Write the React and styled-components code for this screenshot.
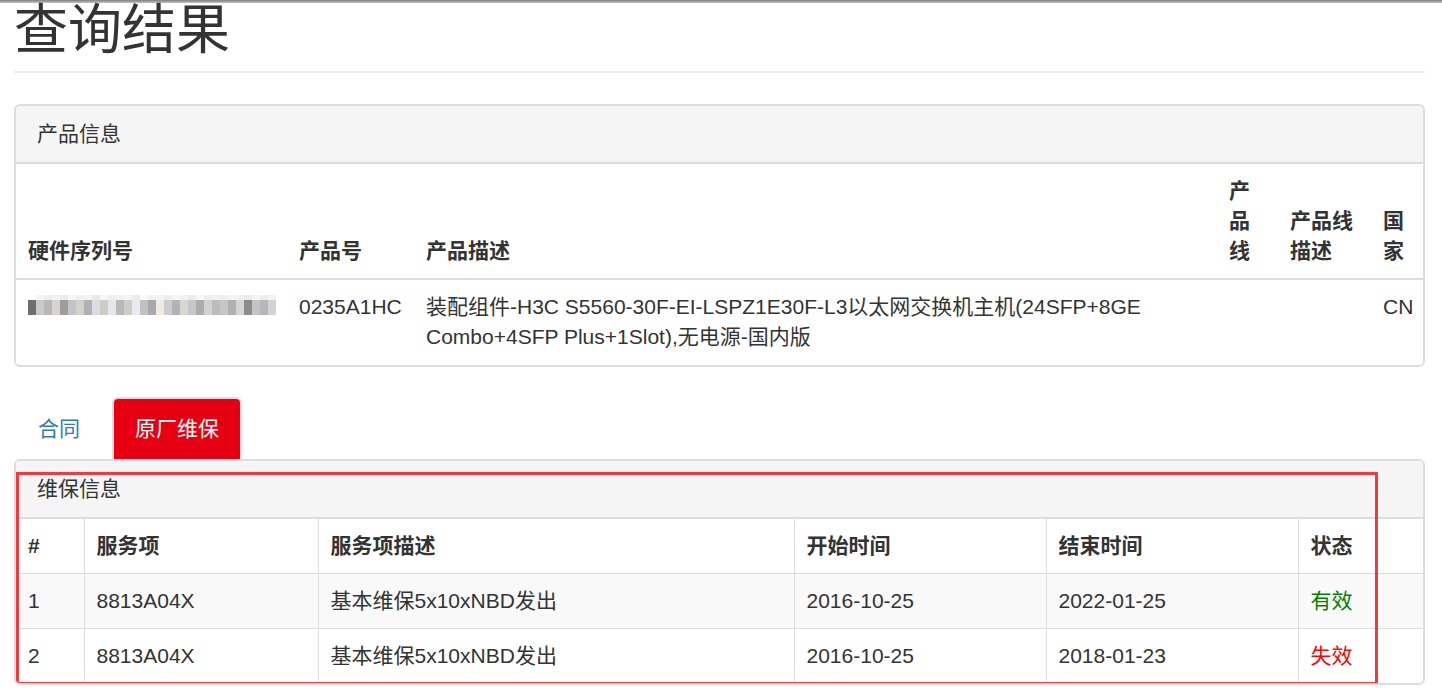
import React from "react";
import styled, { createGlobalStyle } from "styled-components";

const GlobalStyle = createGlobalStyle`
  html, body {
    margin: 0;
    background: #fff;
  }
  body {
    font-family: "Liberation Sans", "Noto Sans CJK SC", sans-serif;
    font-size: 21px;
    line-height: 30px;
    color: #333;
  }
  * { box-sizing: border-box; }
`;

const TopBar = styled.div`
  height: 3px;
  background: linear-gradient(#7f7f7f, #c4c4c4);
`;

const Container = styled.div`
  padding: 0 17px 0 14px;
`;

const PageTitle = styled.h1`
  margin: -2px 0 31px;
  padding-bottom: 11px;
  border-bottom: 2px solid #eee;
  font-size: 54px;
  line-height: 59px;
  font-weight: 400;
  color: #333;
`;

const Panel = styled.div`
  position: relative;
  border: 2px solid #ddd;
  border-radius: 6px;
  background: #fff;
  margin-bottom: ${(p) => (p.$flush ? "0" : "30px")};
  overflow: hidden;
`;

const PanelHeading = styled.div`
  background: #f5f5f5;
  padding: 13px 21px;
  border-bottom: 2px solid #ddd;
`;

const Col = styled.col`
  width: ${(p) => (p.$w ? `${p.$w}px` : "auto")};
`;

const Table = styled.table`
  width: 100%;
  table-layout: fixed;
  border-collapse: collapse;

  th {
    text-align: left;
    font-weight: 700;
    vertical-align: bottom;
    padding: 12px;
    border-bottom: 2px solid #ddd;
  }
  td {
    vertical-align: top;
    padding: 12px 12px 13px;
  }
`;

const BorderedTable = styled(Table)`
  th, td {
    border: 1px solid #ddd;
    padding: 12px;
  }
  th { border-top: 0; }
  tr > :first-child { border-left: 0; }
  tr > :last-child { border-right: 0; }
  tbody tr:last-child td { border-bottom: 0; }
  tbody tr:nth-child(odd) { background: #f9f9f9; }
`;

const Mosaic = styled.div`
  display: flex;
  flex-wrap: wrap;
  width: 248px;
  margin-top: 3px;
`;

const Tile = styled.span`
  width: 8px;
  height: ${(p) => (p.$top ? "5px" : "15px")};
  background: ${(p) => p.$c};
`;

const Tabs = styled.ul`
  list-style: none;
  margin: 0;
  padding: 0 0 0 1px;
  display: flex;
`;

const Tab = styled.li`
  margin-right: 9px;
  padding: 15px 21px;
  border: 2px solid ${(p) => (p.$active ? "#ddd" : "transparent")};
  border-bottom: 0;
  border-radius: 6px 6px 0 0;
  background: ${(p) => (p.$active ? "#e60012" : "transparent")};
  color: ${(p) => (p.$active ? "#fff" : "#337ab7")};
  line-height: 30px;
`;

const Status = styled.span`
  color: ${(p) => (p.$ok ? "#008000" : "#ff0000")};
`;

const Marker = styled.div`
  position: absolute;
  left: 0;
  top: 11px;
  width: 1362px;
  height: 213px;
  border: 3px solid #f33a3a;
  pointer-events: none;
`;

const topTiles = [
  "#fff", "#f4f4f4", "#eee", "#f2f2f2", "#ebebeb", "#f6f6f6", "#efefef", "#f3f3f3",
  "#e9e9e9", "#f7f7f7", "#eeeeee", "#f1f1f1", "#f5f5f5", "#ececec", "#f8f8f8", "#f0f0f0",
  "#f3f3f3", "#ededed", "#f6f6f6", "#f1f1f1", "#ebebeb", "#f7f7f7", "#efefef", "#f2f2f2",
  "#eeeeee", "#f4f4f4", "#f0f0f0", "#ececec", "#f5f5f5", "#ededed", "#f3f3f3",
];
const mainTiles = [
  "#6f6f6f", "#c9c9cc", "#b9b6b6", "#d7d3cf", "#9f9c9c", "#c4c4c8", "#d4d0cc", "#b0b0b6",
  "#dcdde2", "#cfcbc6", "#e4e6ea", "#b8b8bb", "#d0ccc8", "#e7eaf0", "#c1c1c4", "#a9a9ad",
  "#f1eadd", "#cccccf", "#b3b3b6", "#d9d6d2", "#c6c6ca", "#aeabab", "#d2d2d5", "#bcbcbf",
  "#c9c5c0", "#b0b0b3", "#d5d5d8", "#8f8b8b", "#c3c3c6", "#b7b7ba", "#cfd3d8",
];

const productCols = [271, 127, 803, 61, 93, 0];
const serviceCols = [68, 234, 476, 252, 252, 0];

const products = [
  {
    pn: "0235A1HC",
    desc: "装配组件-H3C S5560-30F-EI-LSPZ1E30F-L3以太网交换机主机(24SFP+8GE Combo+4SFP Plus+1Slot),无电源-国内版",
    line: "",
    lineDesc: "",
    country: "CN",
  },
];

const services = [
  { id: 1, code: "8813A04X", desc: "基本维保5x10xNBD发出", start: "2016-10-25", end: "2022-01-25", ok: true },
  { id: 2, code: "8813A04X", desc: "基本维保5x10xNBD发出", start: "2016-10-25", end: "2018-01-23", ok: false },
];

export default function App() {
  return (
    <>
      <GlobalStyle />
      <TopBar />
      <Container>
        <PageTitle>查询结果</PageTitle>

        <Panel>
          <PanelHeading>产品信息</PanelHeading>
          <Table>
            <colgroup>
              {productCols.map((w, i) => (
                <Col key={i} $w={w} />
              ))}
            </colgroup>
            <thead>
              <tr>
                <th>硬件序列号</th>
                <th>产品号</th>
                <th>产品描述</th>
                <th>产品线</th>
                <th>产品线描述</th>
                <th>国家</th>
              </tr>
            </thead>
            <tbody>
              {products.map((p) => (
                <tr key={p.pn}>
                  <td>
                    <Mosaic>
                      {topTiles.map((c, i) => (
                        <Tile key={"t" + i} $top $c={c} />
                      ))}
                      {mainTiles.map((c, i) => (
                        <Tile key={"m" + i} $c={c} />
                      ))}
                    </Mosaic>
                  </td>
                  <td>{p.pn}</td>
                  <td>{p.desc}</td>
                  <td>{p.line}</td>
                  <td>{p.lineDesc}</td>
                  <td>{p.country}</td>
                </tr>
              ))}
            </tbody>
          </Table>
        </Panel>

        <Tabs>
          <Tab>合同</Tab>
          <Tab $active>原厂维保</Tab>
        </Tabs>

        <Panel $flush>
          <PanelHeading>维保信息</PanelHeading>
          <BorderedTable>
            <colgroup>
              {serviceCols.map((w, i) => (
                <Col key={i} $w={w} />
              ))}
            </colgroup>
            <thead>
              <tr>
                <th>#</th>
                <th>服务项</th>
                <th>服务项描述</th>
                <th>开始时间</th>
                <th>结束时间</th>
                <th>状态</th>
              </tr>
            </thead>
            <tbody>
              {services.map((s) => (
                <tr key={s.id}>
                  <td>{s.id}</td>
                  <td>{s.code}</td>
                  <td>{s.desc}</td>
                  <td>{s.start}</td>
                  <td>{s.end}</td>
                  <td>
                    <Status $ok={s.ok}>{s.ok ? "有效" : "失效"}</Status>
                  </td>
                </tr>
              ))}
            </tbody>
          </BorderedTable>
          <Marker />
        </Panel>
      </Container>
    </>
  );
}
